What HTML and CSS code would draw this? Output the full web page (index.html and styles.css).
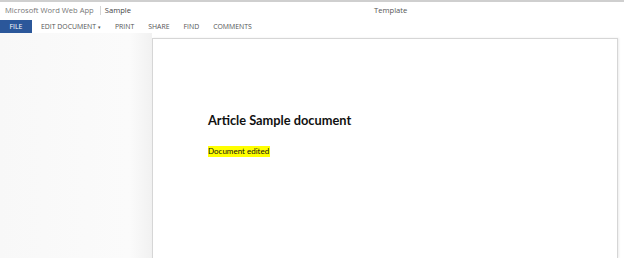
FILE: index.html
```html
<!DOCTYPE html>
<html lang="en">
<head>
  <meta charset="UTF-8" />
  <title>Sample - Microsoft Word Web App</title>
  <link rel="stylesheet" href="styles.css">
</head>
<body>
  <div class="titlebar">
    <span class="app-name">Microsoft Word Web App</span>
    <span class="sep"></span>
    <span class="doc-name">Sample</span>
    <span class="template">Template</span>
  </div>

  <div class="ribbon">
    <a class="file-tab" href="#">FILE</a>
    <a class="tab" href="#">EDIT DOCUMENT <span class="caret">▾</span></a>
    <a class="tab" href="#">PRINT</a>
    <a class="tab" href="#">SHARE</a>
    <a class="tab" href="#">FIND</a>
    <a class="tab" href="#">COMMENTS</a>
  </div>

  <div class="workspace">
    <div class="side"></div>
    <div class="page">
      <h1>Article Sample document</h1>
      <p><span class="mark">Document edited</span></p>
    </div>
  </div>
</body>
</html>
```

FILE: styles.css
```css
body {
  margin: 0;
  background: #fff;
  font-family: "Open Sans", "Noto Sans", sans-serif;
  color: #444;
  height: 258px;
  overflow: hidden;
  display: flex;
  flex-direction: column;
}

.titlebar {
  border-top: 2px solid #cfcfcf;
  height: 16px;
  display: flex;
  align-items: center;
  padding-left: 5px;
  font-size: 7.6px;
  color: #777;
}

.sep {
  width: 1px;
  height: 9px;
  background: #d6d6d6;
  margin: 0 4px 0 6px;
}

.doc-name {
  color: #444;
}

.template {
  margin-left: 243px;
  color: #555;
}

.ribbon {
  height: 14px;
  display: flex;
  align-items: center;
  margin-top: 1px;
  font-size: 6.9px;
}

.ribbon a {
  text-decoration: none;
  color: #555;
}

.file-tab {
  background: #2b579a;
  color: #fff !important;
  width: 32px;
  height: 13px;
  display: flex;
  align-items: center;
  justify-content: center;
  margin-right: 9px;
}

.tab {
  margin-right: 14px;
}

.caret {
  font-size: 5px;
}

.workspace {
  flex: 1;
  display: flex;
}

.side {
  width: 152px;
  background: linear-gradient(to right, #f8f8f8, #fbfbfb 85%, #f1f1f1);
}

.page {
  margin-top: 5px;
  width: 466px;
  border: 1px solid #d6d6d6;
  border-bottom: none;
  box-shadow: 1px 0 2px rgba(0,0,0,0.08);
  padding: 73px 0 0 55px;
  box-sizing: border-box;
  color: #111;
}

h1 {
  margin: 0;
  font-family: Lato, "Open Sans", sans-serif;
  font-size: 12.8px;
  font-weight: bold;
  line-height: 16px;
}

p {
  margin: 18px 0 0 0;
  font-family: Lato, "Open Sans", sans-serif;
  font-size: 8px;
  line-height: 10px;
}

.mark {
  background: #ffff00;
  padding: 0 1px 1px 0;
}
```
